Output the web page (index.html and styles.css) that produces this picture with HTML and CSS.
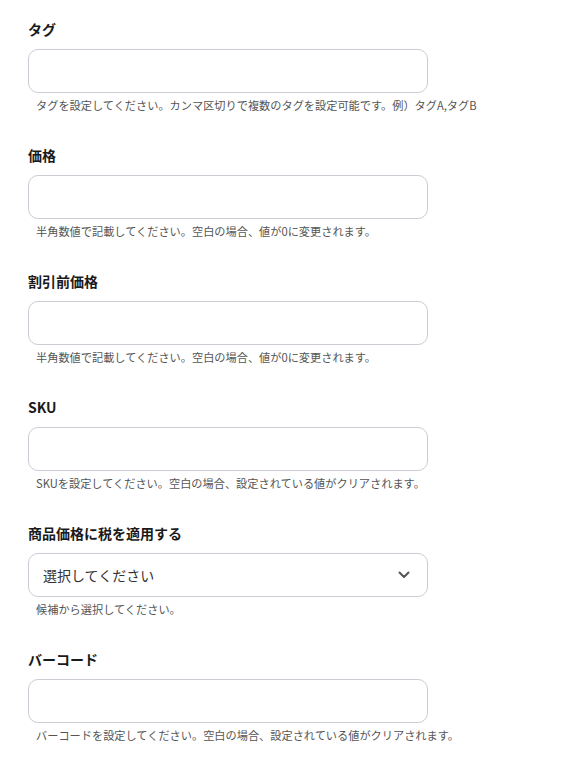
FILE: index.html
```html
<!DOCTYPE html>
<html lang="ja">
<head>
    <meta charset="UTF-8">
    <meta name="viewport" content="width=device-width, initial-scale=1.0">
    <title>商品設定</title>
    <link rel="stylesheet" href="styles.css">
</head>
<body>
    <div class="form">
        <div class="field">
            <label class="field-label">タグ</label>
            <input class="field-input" type="text">
            <div class="field-help">タグを設定してください。カンマ区切りで複数のタグを設定可能です。例）タグA,タグB</div>
        </div>
        <div class="field">
            <label class="field-label">価格</label>
            <input class="field-input" type="text">
            <div class="field-help">半角数値で記載してください。空白の場合、値が0に変更されます。</div>
        </div>
        <div class="field">
            <label class="field-label">割引前価格</label>
            <input class="field-input" type="text">
            <div class="field-help">半角数値で記載してください。空白の場合、値が0に変更されます。</div>
        </div>
        <div class="field">
            <label class="field-label">SKU</label>
            <input class="field-input" type="text">
            <div class="field-help">SKUを設定してください。空白の場合、設定されている値がクリアされます。</div>
        </div>
        <div class="field">
            <label class="field-label">商品価格に税を適用する</label>
            <div class="field-input field-select">
                <span>選択してください</span>
                <svg class="chevron" width="12" height="8" viewBox="0 0 12 8">
                    <path d="M1.5 1.5 L6 6 L10.5 1.5" fill="none" stroke="#555" stroke-width="2" stroke-linecap="round" stroke-linejoin="round"/>
                </svg>
            </div>
            <div class="field-help">候補から選択してください。</div>
        </div>
        <div class="field">
            <label class="field-label">バーコード</label>
            <input class="field-input" type="text">
            <div class="field-help">バーコードを設定してください。空白の場合、設定されている値がクリアされます。</div>
        </div>
    </div>
</body>
</html>
```

FILE: styles.css
```css
body {
    margin: 0;
    background-color: #fff;
    color: #222;
    font-family: "Noto Sans CJK JP", "Noto Sans", sans-serif;
}
.form {
    padding: 19px 0 0 28px;
}
.field {
    margin-bottom: 32px;
}
.field-label {
    display: block;
    height: 20px;
    font-size: 14px;
    line-height: 20px;
    font-weight: bold;
    color: #1a1a1a;
    margin-bottom: 10px;
}
.field-input {
    display: block;
    box-sizing: border-box;
    width: 400px;
    height: 44px;
    margin: 0;
    padding: 0 14px;
    border: 1px solid #c9cdd3;
    border-radius: 10px;
    background-color: #fff;
    font-family: inherit;
    font-size: 14px;
}
.field-select {
    display: flex;
    align-items: center;
    justify-content: space-between;
    color: #333;
}
.chevron {
    margin-right: 3px;
}
.field-help {
    height: 16px;
    margin-top: 4px;
    padding-left: 8px;
    font-size: 11.2px;
    line-height: 16px;
    color: #555;
}
```
